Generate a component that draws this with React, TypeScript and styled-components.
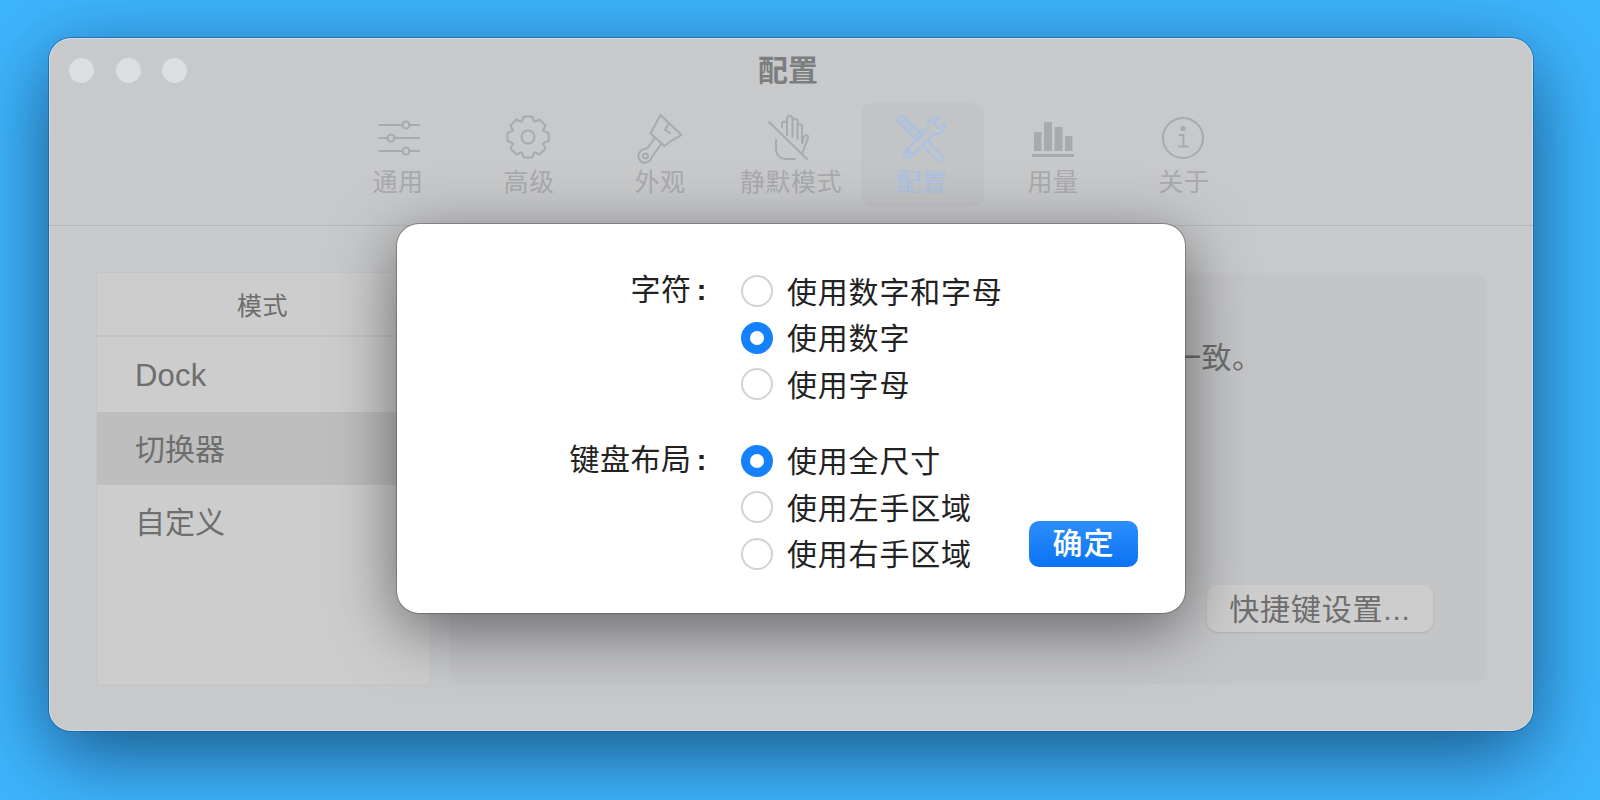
import React from 'react'
import styled, { createGlobalStyle } from 'styled-components'

const cjk = `"Liberation Sans", "Noto Sans CJK SC", sans-serif`

const GlobalStyle = createGlobalStyle`
    html, body {
        margin: 0;
        height: 100%;
        overflow: hidden;
        background: #3eb5fe;
    }
`

const Page = styled.div`
    width: 1600px;
    height: 800px;
    padding: 38px 0 0 49px;
    box-sizing: border-box;
    background: #3eb5fe;
    font-family: ${cjk};
`

const Window = styled.div`
    position: relative;
    width: 1484px;
    height: 693px;
    display: flex;
    flex-direction: column;
    box-sizing: border-box;
    background: #c8c9cb;
    border-radius: 22px;
    box-shadow: inset 0 0 0 1px rgba(235, 235, 235, 0.5), 0 0 0 1px rgba(10, 100, 170, 0.65),
        0 22px 80px rgba(0, 20, 50, 0.6);
`

const TitleBar = styled.div`
    display: grid;
    grid-template-columns: 1fr auto 1fr;
    align-items: center;
    height: 65px;
    padding-right: 6px;
`

const Lights = styled.div`
    display: flex;
    gap: 21.5px;
    margin-left: 20px;
`

const Light = styled.span`
    width: 25px;
    height: 25px;
    border-radius: 50%;
    background: #dcdfe2;
`

const Title = styled.div`
    font-size: 30px;
    font-weight: 700;
    line-height: 40px;
    color: #7d7e80;
`

const Toolbar = styled.div`
    display: flex;
    justify-content: center;
    gap: 8px;
    height: 123px;
    box-sizing: border-box;
    border-bottom: 1px solid #b7b8ba;
`

const ToolItem = styled.div<{ $active?: boolean }>`
    width: 123px;
    height: 104px;
    box-sizing: border-box;
    padding-top: 10px;
    display: flex;
    flex-direction: column;
    align-items: center;
    border-radius: 12px;
    background: ${(p) => (p.$active ? '#c3c4c6' : 'transparent')};
    color: ${(p) => (p.$active ? '#a9c1e3' : '#a8aaad')};
`

const ToolIcon = styled.svg`
    width: 50px;
    height: 50px;
    overflow: visible;
    fill: none;
    stroke: currentColor;
    stroke-width: 2;
    stroke-linecap: round;
    stroke-linejoin: round;
`

const ToolLabel = styled.div`
    font-size: 25px;
    line-height: 38px;
    letter-spacing: 0.5px;
    white-space: nowrap;
`

const Content = styled.div`
    flex: 1;
    display: flex;
    gap: 20px;
    padding: 47px 47px 47px 48px;
    min-height: 0;
`

const Sidebar = styled.div`
    width: 333px;
    background: #cdcdcd;
    box-shadow: 0 0 0 1px #c4c5c6;
`

const SidebarHeader = styled.div`
    height: 64px;
    display: flex;
    align-items: center;
    justify-content: center;
    font-size: 25px;
    letter-spacing: 0.5px;
    padding-right: 2px;
    color: #6e6e6e;
    border-bottom: 2px solid #c2c3c3;
    box-sizing: border-box;
`

const SidebarRow = styled.div<{ $selected?: boolean; $latin?: boolean }>`
    height: ${(p) => (p.$latin ? '75px' : '73px')};
    box-sizing: border-box;
    padding: ${(p) => (p.$latin ? '3px 0 0 38px' : '0 0 3px 38px')};
    display: flex;
    align-items: center;
    font-size: ${(p) => (p.$latin ? '31px' : '30px')};
    letter-spacing: ${(p) => (p.$latin ? '0.2px' : '0')};
    color: #6e6e6e;
    background: ${(p) => (p.$selected ? '#bebebe' : 'transparent')};
`

const Panel = styled.div`
    flex: 1;
    display: flex;
    flex-direction: column;
    justify-content: space-between;
    align-items: flex-end;
    padding: 65px 53px 52px 721px;
    background: #c4c5c7;
    border-radius: 12px;
`

const PanelText = styled.div`
    align-self: flex-start;
    font-size: 30px;
    line-height: 40px;
    letter-spacing: 0.5px;
    color: #6e6e6e;
    white-space: nowrap;
`

const ShortcutButton = styled.div`
    width: 226px;
    height: 47px;
    box-sizing: border-box;
    padding-bottom: 4px;
    display: flex;
    align-items: center;
    justify-content: center;
    font-size: 30px;
    letter-spacing: 0.8px;
    color: #6e6e6e;
    background: #cdcdcd;
    border-radius: 11px;
    box-shadow: 0 1px 2px rgba(0, 0, 0, 0.12);
`

const Dialog = styled.div`
    position: absolute;
    left: 348px;
    top: 186px;
    width: 788px;
    height: 389px;
    box-sizing: border-box;
    display: flex;
    justify-content: space-between;
    align-items: flex-end;
    padding: 44px 47px 46px 170px;
    background: #fff;
    border-radius: 22px;
    color: #222;
    box-shadow: 0 0 0 1px rgba(70, 70, 70, 0.42), 0 16px 64px rgba(0, 0, 0, 0.5);
`

const Form = styled.div`
    align-self: flex-start;
    display: grid;
    grid-template-columns: 140px auto;
    column-gap: 34px;
    row-gap: 30px;
`

const GroupLabel = styled.div`
    font-size: 30px;
    line-height: 44px;
    letter-spacing: 0.5px;
    text-align: right;
    white-space: nowrap;
`

const Colon = styled.span`
    margin-left: 5px;
    font-weight: 700;
`

const Options = styled.div`
    display: flex;
    flex-direction: column;
`

const Option = styled.div`
    height: 46.5px;
    display: flex;
    align-items: center;
    gap: 14px;
    font-size: 30px;
    letter-spacing: 0.8px;
    white-space: nowrap;
`

const OptionText = styled.span`
    padding-bottom: 3px;
`

const Radio = styled.span<{ $on?: boolean }>`
    width: 32px;
    height: 32px;
    box-sizing: border-box;
    border-radius: 50%;
    background: #fff;
    border: ${(p) => (p.$on ? '9px solid #1681ff' : '2px solid #d2d2d2')};
`

const ConfirmButton = styled.div`
    width: 109px;
    height: 46px;
    box-sizing: border-box;
    padding-bottom: 7px;
    display: flex;
    align-items: center;
    justify-content: center;
    font-size: 30px;
    font-weight: 500;
    letter-spacing: 1px;
    color: #fff;
    border-radius: 10px;
    background: linear-gradient(#2c8eff, #0b73f2);
`

const gearPath = () => {
    const c = 24
    const parts: string[] = []
    for (let i = 0; i < 8; i++) {
        const a = (i * Math.PI) / 4 - Math.PI / 2
        const pts: [number, number][] = [
            [a - 0.38, 16.5],
            [a - 0.2, 21],
            [a + 0.2, 21],
            [a + 0.38, 16.5],
        ]
        pts.forEach(([t, r]) => {
            const cmd = parts.length === 0 ? 'M' : 'L'
            parts.push(`${cmd}${(c + r * Math.cos(t)).toFixed(2)} ${(c + r * Math.sin(t)).toFixed(2)}`)
        })
    }
    return parts.join(' ') + ' Z'
}

const SlidersIcon = () => (
    <ToolIcon viewBox="0 0 50 50">
        <path d="M6 12H30M36 12H46M6 25H15M21 25H46M6 38H30M36 38H46" />
        <circle cx="33" cy="12" r="3.5" />
        <circle cx="18" cy="25" r="3.5" />
        <circle cx="33" cy="38" r="3.5" />
    </ToolIcon>
)

const GearIcon = () => (
    <ToolIcon viewBox="0 0 50 50">
        <path d={gearPath()} />
        <circle cx="24" cy="24" r="6.5" />
    </ToolIcon>
)

const BrushIcon = () => (
    <ToolIcon viewBox="0 0 50 50">
        <path d="M25.5 2 L46.5 22 L36 28 L29.5 33 L15.5 20.5 L20 12 Z" />
        <path d="M34 10 L30 17 L35 20" />
        <path d="M20 25 L12 35.5 C5 36 2 42 4 46 C7 52 15 50 17 44 L26.5 30.5" />
        <circle cx="10.5" cy="43" r="2.5" />
    </ToolIcon>
)

const HandOffIcon = () => (
    <ToolIcon viewBox="0 0 50 50">
        <path d="M3 9 L41 46" />
        <path d="M10 27 V36 C10 42 14 46 21 46 H29" />
        <path d="M16 14 V11 C16 7.5 21 7.5 21 11 V22 M21 9 V5.5 C21 2 26.5 2 26.5 5.5 V24 M26.5 8 C26.5 5 31.5 5 31.5 8 V26 M31.5 13 C31.5 10.5 36 10.5 36 13 V30 L38 24 C39 21 43 22 42 25 L36 41" />
    </ToolIcon>
)

const ToolsIcon = () => (
    <ToolIcon viewBox="0 0 50 50">
        <g transform="translate(0 2) rotate(-45 25 25)">
            <path d="M21.5 -7 H28.5 L29.5 17 H20.5 Z" />
            <path d="M25 -3 V13 M22.8 -3 V13 M27.2 -3 V13" strokeWidth="1" />
            <path d="M20.5 17 H29.5 V22 H20.5" />
            <path d="M21.5 31 V49 C21.5 54 28.5 54 28.5 49 V31" />
        </g>
        <g transform="translate(0 2) rotate(45 25 25)">
            <path d="M21 -3 C15 0 15 9 21 12 V44 C21 51 29 51 29 44 V12 C35 9 35 0 29 -3 V5 H21 Z" />
            <circle cx="25" cy="44" r="1.8" />
        </g>
    </ToolIcon>
)

const BarsIcon = () => (
    <ToolIcon viewBox="0 0 50 50">
        <path
            fill="currentColor"
            stroke="none"
            d="M6 19H13.5V38H6ZM16 9H24V38H16ZM26.5 14H34.5V38H26.5ZM37 23H44.5V38H37ZM4 41H46V44H4Z"
        />
    </ToolIcon>
)

const InfoIcon = () => (
    <ToolIcon viewBox="0 0 50 50">
        <circle cx="24" cy="25" r="20" />
        <circle cx="24" cy="15.5" r="1.6" fill="currentColor" />
        <path d="M20.5 22H24.5V33M19.5 33.5H29" />
    </ToolIcon>
)

const tools = [
    { label: '通用', icon: <SlidersIcon /> },
    { label: '高级', icon: <GearIcon /> },
    { label: '外观', icon: <BrushIcon /> },
    { label: '静默模式', icon: <HandOffIcon /> },
    { label: '配置', icon: <ToolsIcon />, active: true },
    { label: '用量', icon: <BarsIcon /> },
    { label: '关于', icon: <InfoIcon /> },
]

const groups = [
    {
        label: '字符',
        options: [
            { text: '使用数字和字母' },
            { text: '使用数字', on: true },
            { text: '使用字母' },
        ],
    },
    {
        label: '键盘布局',
        options: [
            { text: '使用全尺寸', on: true },
            { text: '使用左手区域' },
            { text: '使用右手区域' },
        ],
    },
]

export default function App() {
    return (
        <Page>
            <GlobalStyle />
            <Window>
                <TitleBar>
                    <Lights>
                        <Light />
                        <Light />
                        <Light />
                    </Lights>
                    <Title>配置</Title>
                </TitleBar>
                <Toolbar>
                    {tools.map((t) => (
                        <ToolItem key={t.label} $active={t.active}>
                            {t.icon}
                            <ToolLabel>{t.label}</ToolLabel>
                        </ToolItem>
                    ))}
                </Toolbar>
                <Content>
                    <Sidebar>
                        <SidebarHeader>模式</SidebarHeader>
                        <SidebarRow $latin>Dock</SidebarRow>
                        <SidebarRow $selected>切换器</SidebarRow>
                        <SidebarRow>自定义</SidebarRow>
                    </Sidebar>
                    <Panel>
                        <PanelText>一致。</PanelText>
                        <ShortcutButton>快捷键设置...</ShortcutButton>
                    </Panel>
                </Content>
                <Dialog>
                    <Form>
                        {groups.map((g) => (
                            <React.Fragment key={g.label}>
                                <GroupLabel>
                                    {g.label}
                                    <Colon>:</Colon>
                                </GroupLabel>
                                <Options>
                                    {g.options.map((o) => (
                                        <Option key={o.text}>
                                            <Radio $on={o.on} />
                                            <OptionText>{o.text}</OptionText>
                                        </Option>
                                    ))}
                                </Options>
                            </React.Fragment>
                        ))}
                    </Form>
                    <ConfirmButton>确定</ConfirmButton>
                </Dialog>
            </Window>
        </Page>
    )
}
